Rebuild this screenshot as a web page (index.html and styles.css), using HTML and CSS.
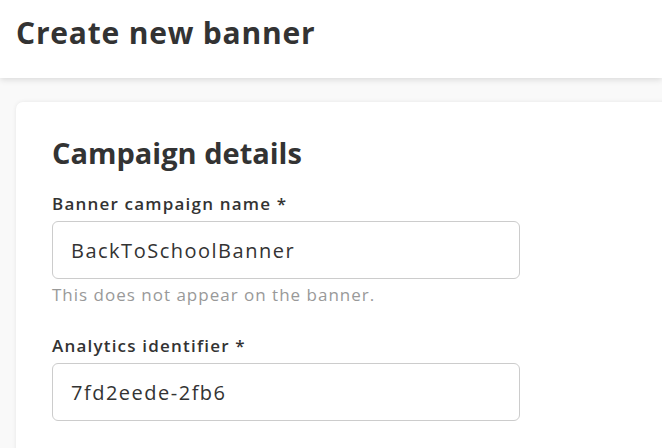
FILE: index.html
```html
<!DOCTYPE html>
<html>
<head>
<meta charset="utf-8">
<link rel="stylesheet" href="styles.css">
</head>
<body>
<header class="topbar">
  <h1 class="page-title">Create new banner</h1>
</header>
<main class="content">
  <section class="card">
    <h2 class="card-title">Campaign details</h2>
    <div class="field">
      <label class="field-label">Banner campaign name *</label>
      <div class="input">BackToSchoolBanner</div>
      <p class="hint">This does not appear on the banner.</p>
    </div>
    <div class="field">
      <label class="field-label">Analytics identifier *</label>
      <div class="input">7fd2eede-2fb6</div>
    </div>
  </section>
</main>
</body>
</html>
```
FILE: styles.css
```css
html, body {
  margin: 0;
  padding: 0;
}
body {
  background: #f9f9f9;
  font-family: "Open Sans", "Liberation Sans", sans-serif;
  color: #333;
  width: 662px;
  height: 448px;
  overflow: hidden;
}
.topbar {
  position: relative;
  z-index: 1;
  box-sizing: border-box;
  background: #fff;
  height: 78px;
  box-shadow: 0 2px 6px rgba(0,0,0,0.12);
  padding: 13px 0 0 16px;
}
.page-title {
  margin: 0;
  font-size: 30px;
  line-height: 40px;
  font-weight: 700;
  color: #333;
  letter-spacing: 0.8px;
}
.content {
  padding: 24px 0 0 16px;
}
.card {
  background: #fff;
  border-radius: 7px 0 0 0;
  box-shadow: 0 0 4px rgba(0,0,0,0.08);
  width: 700px;
  padding: 33px 36px 40px;
}
.card-title {
  margin: 0 0 22px;
  font-size: 29px;
  line-height: 36px;
  font-weight: 700;
  color: #333;
}
.field {
  margin-bottom: 29px;
}
.field-label {
  display: block;
  font-size: 17px;
  line-height: 22px;
  font-weight: 600;
  color: #333;
  letter-spacing: 1.2px;
  margin-bottom: 6px;
}
.input {
  box-sizing: border-box;
  width: 468px;
  height: 58px;
  border: 1px solid #ccc;
  border-radius: 6px;
  padding: 0 18px;
  display: flex;
  align-items: center;
  font-size: 20px;
  letter-spacing: 1.5px;
  color: #333;
}
.hint {
  margin: 5px 0 0;
  font-size: 17px;
  line-height: 22px;
  letter-spacing: 1px;
  color: #999;
}
```
